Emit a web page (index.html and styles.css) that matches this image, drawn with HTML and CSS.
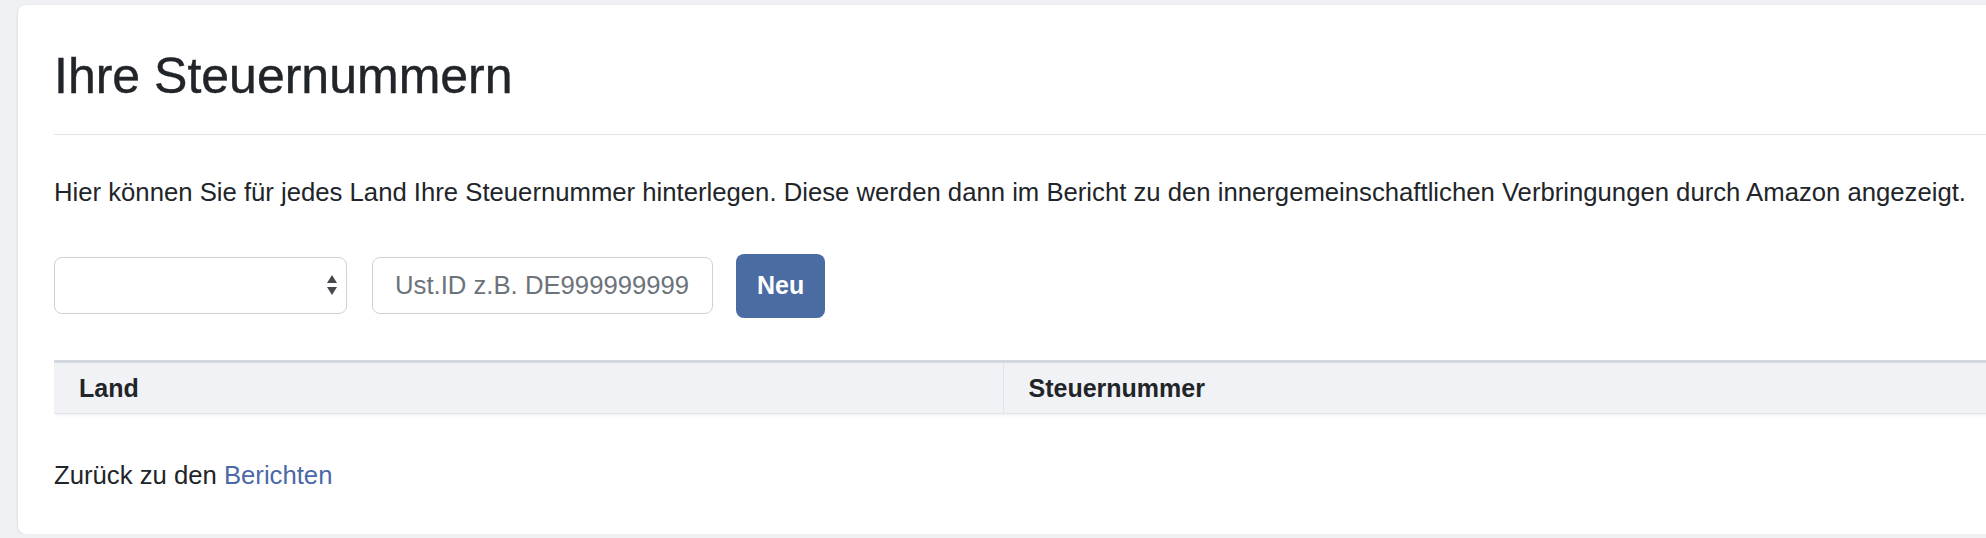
FILE: index.html
```html
<!DOCTYPE html>
<html lang="de">
<head>
  <meta charset="UTF-8" />
  <meta name="viewport" content="width=device-width, initial-scale=1.0" />
  <title>Ihre Steuernummern</title>
  <link rel="stylesheet" href="styles.css">
</head>
<body>

  <div class="card">
    <h1 class="page-title">Ihre Steuernummern</h1>
    <hr class="divider">

    <p class="intro">Hier können Sie für jedes Land Ihre Steuernummer hinterlegen. Diese werden dann im Bericht zu den innergemeinschaftlichen Verbringungen durch Amazon angezeigt.</p>

    <!-- New tax number -->
    <form class="tax-form" onsubmit="return false;">
      <div class="select-wrap">
        <select class="field country-select">
          <option></option>
        </select>
        <svg class="select-arrows" width="10" height="20" viewBox="0 0 10 20">
          <path d="M5 0 L10 8 L0 8 Z" fill="#45484c" />
          <path d="M0 12 L10 12 L5 20 Z" fill="#45484c" />
        </svg>
      </div>
      <input class="field vat-input" type="text" placeholder="Ust.ID z.B. DE999999999">
      <button class="btn-new" type="submit">Neu</button>
    </form>

    <table class="tax-table">
      <thead>
        <tr>
          <th class="col-country">Land</th>
          <th>Steuernummer</th>
        </tr>
      </thead>
      <tbody></tbody>
    </table>

    <p class="back">Zurück zu den <a href="#" class="link">Berichten</a></p>
  </div>

</body>
</html>
```

FILE: styles.css
```css
* {
  margin: 0;
  padding: 0;
  box-sizing: border-box;
}

body {
  font-family: "Liberation Sans", Arial, sans-serif;
  font-size: 25.7px;
  line-height: 37.5px;
  color: #212529;
  background: #eef0f3;
  overflow: hidden;
}

.card {
  width: 2100px;
  margin: 5px 0 0 18px;
  padding: 41px 36px 40px;
  background: #fff;
  border-radius: 8px;
  box-shadow: 0 1px 3px rgba(0, 0, 0, 0.12);
}

.page-title {
  font-size: 50px;
  font-weight: normal;
  line-height: 60px;
  -webkit-text-stroke: 0.4px #212529;
}

.divider {
  border: 0;
  border-top: 1px solid #e4e4e6;
  margin-top: 28px;
}

.intro {
  margin-top: 39px;
}

.tax-form {
  display: flex;
  align-items: center;
  margin-top: 42px;
}

.field {
  height: 57px;
  border: 1.5px solid #ced2d8;
  border-radius: 8px;
  background: #fff;
  font-family: inherit;
  font-size: 25.7px;
  color: #212529;
  padding: 0 22px;
  outline: none;
}

.select-wrap {
  position: relative;
  margin-right: 25px;
}

.country-select {
  width: 293px;
  appearance: none;
  -webkit-appearance: none;
}

/* up/down arrows of the select */
.select-arrows {
  position: absolute;
  right: 10px;
  top: 18px;
  pointer-events: none;
}

.vat-input {
  width: 341px;
  margin-right: 23px;
}

.vat-input::placeholder {
  color: #6c737b;
}

.btn-new {
  height: 64px;
  padding: 0 21px;
  border: 0;
  border-radius: 8px;
  background: #4b6ba3;
  color: #fff;
  font-family: inherit;
  font-size: 25px;
  font-weight: bold;
  cursor: pointer;
}

.tax-table {
  width: 100%;
  margin-top: 42px;
  border-collapse: collapse;
  box-shadow: 0 3px 3px -2px rgba(0, 0, 0, 0.08);
}

.tax-table th {
  text-align: left;
  font-size: 25px;
  font-weight: bold;
  line-height: 38px;
  padding: 6px 25px;
  background: #f1f2f6;
  border-top: 3px solid #d3d7e0;
  border-bottom: 1px solid #e3e5ea;
}

.tax-table .col-country {
  width: 949px;
  border-right: 1px solid #e2e4ea;
}

.back {
  margin-top: 43px;
}

.link {
  color: #4a69a6;
  text-decoration: none;
}
```
